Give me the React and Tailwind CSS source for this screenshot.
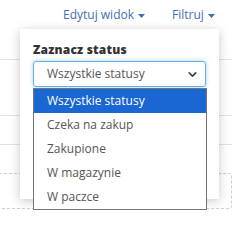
import { ChevronDown } from 'lucide-react';

const statuses = ['Wszystkie statusy', 'Czeka na zakup', 'Zakupione', 'W magazynie', 'W paczce'];

function Caret() {
  return (
    <svg width="7" height="4" viewBox="0 0 7 4" className="ml-[4px] mt-[2px]">
      <path d="M0 0 L7 0 L3.5 4 Z" fill="currentColor" />
    </svg>
  );
}

export default function App() {
  return (
    <div className="relative h-[231px] w-[245px] overflow-hidden bg-white font-['Open_Sans',sans-serif]">
      <div className="flex h-[30px] items-center pl-[63px] text-[12px] text-[#3f6fb4]">
        <span className="flex items-center">
          Edytuj widok
          <Caret />
        </span>
        <span className="ml-[27px] flex items-center">
          Filtruj
          <Caret />
        </span>
      </div>

      <div className="w-[232px]">
        <div className="mt-[29px] h-[56px] border-t border-[#e2e2e2]" />
        <div className="h-[29px] border-t border-[#e2e2e2]" />
        <div className="border-t border-[#e2e2e2]" />
        <div className="ml-[-4px] mt-[28px] h-[36px] rounded-[3px] border border-dashed border-[#cfcfcf]" />
      </div>

      <div className="absolute left-[20px] top-[29px] h-[170px] w-[199px] bg-white pl-[13px] shadow-[0_2px_10px_rgba(0,0,0,0.22)]">
        <div className="pt-[12px] text-[12px] font-extrabold leading-[18px] tracking-[0.2px] text-[#333]">Zaznacz status</div>
        <div className="mt-[2px] flex h-[26px] w-[173px] items-center justify-between rounded-[3px] border border-[#66afe9] pl-[13px] pr-[6px] text-[12px] text-[#555] shadow-[0_0_4px_rgba(102,175,233,0.6)]">
          <span>Wszystkie statusy</span>
          <ChevronDown size={13} strokeWidth={3} className="text-[#444]" />
        </div>

        <div className="absolute left-[13px] top-[59px] w-[174px] border border-[#767676] bg-white">
          {statuses.map((s, i) => (
            <div
              key={s}
              className={
                i === 0
                  ? 'flex h-[24px] items-center bg-[#1a66d2] pl-[13px] text-[12px] text-white'
                  : 'flex h-[24px] items-center pl-[13px] text-[12px] text-[#555]'
              }
            >
              {s}
            </div>
          ))}
        </div>
      </div>
    </div>
  );
}
